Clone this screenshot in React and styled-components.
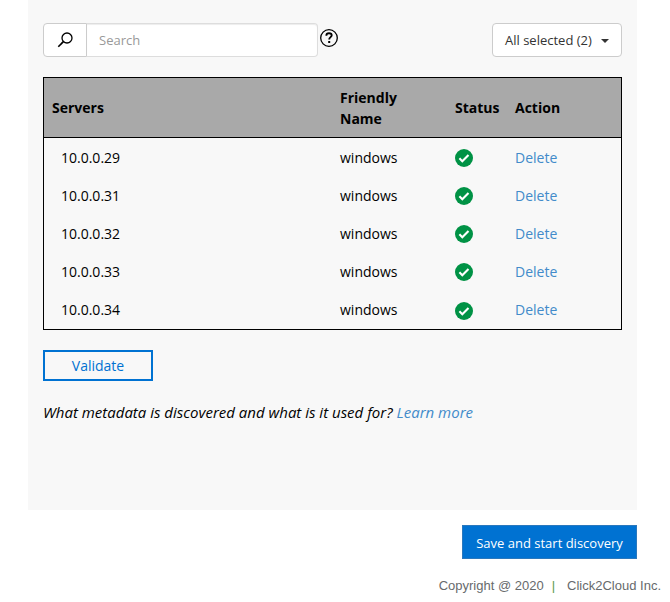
import React, { useState } from "react";
import styled, { createGlobalStyle } from "styled-components";

const GlobalStyle = createGlobalStyle`
  * { box-sizing: border-box; }
  body {
    margin: 0;
    background: #fff;
    color: #000;
    font: 14px/21px "Open Sans", "Noto Sans", sans-serif;
  }
  button, input { font: inherit; }
`;

const Page = styled.div`
  padding-left: 28px;
`;

const Panel = styled.main`
  margin-right: 33px;
  min-height: 510px;
  padding: 23px 15px;
  background: #f8f8f8;
`;

const Toolbar = styled.div`
  display: flex;
  justify-content: space-between;
  margin-bottom: 20px;
`;

const SearchArea = styled.div`
  display: flex;
  gap: 2px;
`;

const SearchButton = styled.button`
  display: flex;
  align-items: center;
  justify-content: center;
  width: 44px;
  height: 34px;
  padding: 0;
  border: 1px solid #ccc;
  border-radius: 4px 0 0 4px;
  background: #fff;
`;

const SearchGroup = styled.div`
  display: flex;
`;

const SearchInput = styled.input`
  width: 231px;
  height: 34px;
  padding: 6px 12px;
  border: 1px solid #ddd;
  border-left: 0;
  border-radius: 0 4px 4px 0;
  background: #fff;
  box-shadow: inset 0 1px 1px rgba(0, 0, 0, 0.075);
  font-size: 13px;
  outline: none;
  &::placeholder { color: #999; opacity: 1; }
`;

const HelpButton = styled.button`
  display: flex;
  align-self: flex-start;
  padding: 6px 0 0;
  border: 0;
  background: none;
`;

const FilterButton = styled.button`
  display: flex;
  align-items: center;
  justify-content: space-between;
  width: 130px;
  height: 34px;
  padding: 0 12px;
  border: 1px solid #ccc;
  border-radius: 4px;
  background: #fff;
  color: #333;
  font-size: 13px;
  white-space: nowrap;
`;

const Caret = styled.span`
  margin-top: 2px;
  border: 4px solid transparent;
  border-top-color: #333;
  border-bottom: 0;
`;

const ServerTable = styled.table`
  width: 100%;
  table-layout: fixed;
  border: 1px solid #000;
  border-spacing: 0;
`;

const Column = styled.col`
  width: ${({ $width }) => $width};
`;

const HeadCell = styled.th`
  height: 60px;
  padding: 8px;
  border-bottom: 1px solid #000;
  background: #a9a9a9;
  text-align: left;
`;

const Row = styled.tr`
  height: 38px;
  &:last-child { height: 39px; }
`;

const Cell = styled.td`
  padding: 0 8px 0 ${({ $inset }) => ($inset ? 17 : 8)}px;
`;

const StatusCell = styled(Cell)`
  padding-top: 2px;
`;

const StatusIcon = styled.svg`
  display: block;
`;

const Link = styled.a`
  color: #428bca;
  text-decoration: none;
`;

const ValidateButton = styled.button`
  display: block;
  width: 110px;
  height: 31px;
  margin-top: 20px;
  padding: 0;
  border: 2px solid #0072d2;
  background: transparent;
  color: #0072d2;
`;

const Note = styled.p`
  margin: 21px 0 0;
  font-size: 15px;
  font-style: italic;
`;

const Actions = styled.div`
  display: flex;
  justify-content: flex-end;
  margin: 15px 33px 0 0;
`;

const SaveButton = styled.button`
  width: 175px;
  height: 34px;
  padding: 2px 0 0;
  border: 1px solid #2a78bd;
  background: #0072d2;
  color: #fff;
  font-size: 13px;
  white-space: nowrap;
`;

const Footer = styled.footer`
  display: flex;
  justify-content: flex-end;
  margin-top: 16px;
  padding-right: 9px;
  color: #676a6c;
  font: 13px/21px "Liberation Sans", Arial, sans-serif;
`;

const Divider = styled.span`
  margin: 0 12px 0 8px;
  color: #5b9b4c;
`;

const servers = ["10.0.0.29", "10.0.0.31", "10.0.0.32", "10.0.0.33", "10.0.0.34"];

function SearchIcon() {
  return (
    <svg width="16" height="16" viewBox="0 0 16 16" fill="none" stroke="#000" aria-hidden="true">
      <circle cx="10" cy="6" r="5" strokeWidth="1.3" />
      <path d="M6.4 9.6 1.3 14.7" strokeWidth="1.6" />
    </svg>
  );
}

function HelpIcon() {
  return (
    <svg width="18" height="18" viewBox="0 0 18 18" fill="none" stroke="#000" aria-hidden="true">
      <circle cx="9" cy="9" r="8.3" strokeWidth="1.3" />
      <path d="M6.4 6.8V6.2C6.4 4.9 7.5 4.2 9 4.2s2.7.8 2.7 2.1c0 1.8-2.5 1.9-2.5 4.2" strokeWidth="1.9" />
      <path d="M9.2 12v2" strokeWidth="2" />
    </svg>
  );
}

function ValidStatus() {
  return (
    <StatusIcon width="18" height="18" viewBox="0 0 18 18" role="img" aria-label="Valid">
      <circle cx="9" cy="9" r="9" fill="#009245" />
      <path d="m4.4 9.3 2.9 2.9 6.2-6.3" fill="none" stroke="#fff" strokeWidth="2.1" />
    </StatusIcon>
  );
}

export default function App() {
  const [query, setQuery] = useState("");
  const visible = servers.filter((address) => address.includes(query));

  return (
    <>
      <GlobalStyle />
      <Page>
        <Panel>
          <Toolbar>
            <SearchArea>
              <SearchGroup>
                <SearchButton aria-label="Search servers"><SearchIcon /></SearchButton>
                <SearchInput
                  type="text"
                  aria-label="Search"
                  placeholder="Search"
                  value={query}
                  onChange={(event) => setQuery(event.target.value)}
                />
              </SearchGroup>
              <HelpButton aria-label="Help"><HelpIcon /></HelpButton>
            </SearchArea>
            <FilterButton aria-haspopup="listbox">All selected (2)<Caret /></FilterButton>
          </Toolbar>
          <ServerTable>
            <colgroup>
              <Column $width="auto" />
              <Column $width="115px" />
              <Column $width="60px" />
              <Column $width="114px" />
            </colgroup>
            <thead>
              <tr>
                <HeadCell scope="col">Servers</HeadCell>
                <HeadCell scope="col">Friendly<br />Name</HeadCell>
                <HeadCell scope="col">Status</HeadCell>
                <HeadCell scope="col">Action</HeadCell>
              </tr>
            </thead>
            <tbody>
              {visible.map((address) => (
                <Row key={address}>
                  <Cell $inset>{address}</Cell>
                  <Cell>windows</Cell>
                  <StatusCell><ValidStatus /></StatusCell>
                  <Cell><Link href="#delete">Delete</Link></Cell>
                </Row>
              ))}
            </tbody>
          </ServerTable>
          <ValidateButton>Validate</ValidateButton>
          <Note>
            What metadata is discovered and what is it used for? <Link href="#learn-more">Learn more</Link>
          </Note>
        </Panel>
        <Actions><SaveButton>Save and start discovery</SaveButton></Actions>
        <Footer>
          <span>Copyright @ 2020</span>
          <Divider>|</Divider>
          <span>Click2Cloud Inc.</span>
        </Footer>
      </Page>
    </>
  );
}
